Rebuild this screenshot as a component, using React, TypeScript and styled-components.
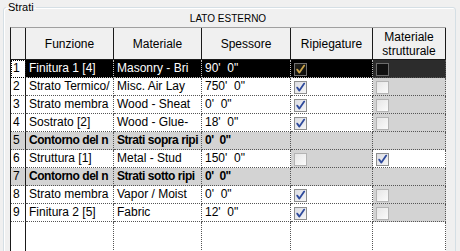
import React from 'react';
import styled, { createGlobalStyle, css } from 'styled-components';

const GlobalStyle = createGlobalStyle`
  html, body {
    margin: 0;
    padding: 0;
    background: #f0f0f0;
    overflow: hidden;
  }
  body {
    font-family: "Liberation Sans", Arial, sans-serif;
    font-size: 12px;
    color: #000;
  }
`;

const Page = styled.div`
  width: 460px;
  height: 251px;
  overflow: hidden;
  padding: 0 4px 0 3px;
  box-sizing: border-box;
`;

const GroupBox = styled.fieldset`
  margin: 0;
  padding: 0 9px 0 6px;
  min-width: 0;
  height: 280px;
  box-sizing: border-box;
  border: 1px solid #d5dfe5;
  border-radius: 3px;
  box-shadow: inset 1px 1px 0 #fff;
`;

const Legend = styled.legend`
  margin-left: -4px;
  padding: 0 2px;
  font-size: 11px;
  line-height: 14px;
`;

const SideTitle = styled.div`
  width: 436px;
  margin: -2px 0 2px;
  text-align: center;
  font-size: 10px;
  line-height: 13px;
`;

const COLS = '15px 88px 88px 89px 82px 73px';

const Table = styled.div`
  width: 436px;
  box-sizing: border-box;
  border-left: 1px solid #1a1a1a;
  border-top: 1px solid #a0a0a0;
`;

const HeaderRow = styled.div`
  display: grid;
  grid-template-columns: ${COLS};
  height: 32px;
  background: #f0f0f0;
`;

const HeaderCell = styled.div`
  display: flex;
  align-items: center;
  justify-content: center;
  text-align: center;
  line-height: 14px;
  box-sizing: border-box;
  border-right: 1px solid #1a1a1a;
  border-bottom: 1px solid #1a1a1a;
`;

const Row = styled.div`
  display: grid;
  grid-template-columns: ${COLS};
  height: 18px;
`;

type Tone = 'white' | 'gray' | 'sel' | 'selGray';

const toneBg: Record<Tone, string> = {
  white: '#fff',
  gray: '#d3d3d3',
  sel: '#000',
  selGray: '#2c2c2c',
};

const Cell = styled.div<{ $tone: Tone; $bold?: boolean }>`
  box-sizing: border-box;
  padding: 0 0 0 3px;
  overflow: hidden;
  white-space: pre;
  line-height: 17px;
  background: ${p => toneBg[p.$tone]};
  color: ${p => (p.$tone === 'sel' || p.$tone === 'selGray' ? '#fff' : '#000')};
  font-weight: ${p => (p.$bold ? 'bold' : 'normal')};
  letter-spacing: ${p => (p.$bold ? '-0.45px' : '0')};
  border-right: 1px dotted ${p => (p.$tone === 'sel' ? '#bbb' : '#555')};
  border-bottom: 1px dotted ${p => (p.$tone === 'sel' ? '#bbb' : '#555')};
`;

const RowHead = styled.div<{ $focus?: boolean; $tone: Tone }>`
  box-sizing: border-box;
  padding-left: 2px;
  line-height: 17px;
  background: ${p => (p.$tone === 'gray' ? '#d3d3d3' : '#fff')};
  border-right: 1px solid #1a1a1a;
  border-bottom: 1px dotted #555;
  ${p =>
    p.$focus &&
    css`
      outline: 1px dotted #000;
      outline-offset: -1px;
    `}
`;

const FillerRow = styled(Row)`
  height: 40px;
`;

const FillerHead = styled.div`
  border-right: 1px solid #1a1a1a;
  background: #fff;
`;

const FillerCell = styled.div`
  border-right: 1px dotted #555;
  background: #fff;
`;

type BoxKind = 'normal' | 'disabled' | 'sel' | 'selGray';

const boxStyles: Record<BoxKind, ReturnType<typeof css>> = {
  normal: css`
    border-color: #8e8f8f;
    background: linear-gradient(135deg, #dcdde3 0%, #f6f6f6 100%);
  `,
  disabled: css`
    border-color: #b4b4b4;
    background: linear-gradient(135deg, #e6e6e6 0%, #fbfbfb 100%);
  `,
  sel: css`
    border-color: #717070;
    background: linear-gradient(135deg, #23221c 0%, #090909 100%);
  `,
  selGray: css`
    border-color: #6c6c6c;
    background: #111;
  `,
};

const Box = styled.span<{ $kind: BoxKind }>`
  display: block;
  width: 13px;
  height: 13px;
  margin-top: 3px;
  box-sizing: border-box;
  border: 1px solid;
  ${p => boxStyles[p.$kind]}
  svg {
    display: block;
  }
`;

const CheckBox = ({ checked, kind }: { checked?: boolean; kind: BoxKind }) => (
  <Box $kind={kind}>
    {checked && (
      <svg width="11" height="11" viewBox="0 0 11 11">
        <path
          d="M2.2 5.6 L4.4 8.6 L9.2 1.6"
          fill="none"
          stroke={kind === 'sel' ? '#c9a24a' : '#2e4a9c'}
          strokeWidth="1.8"
          strokeLinecap="round"
          strokeLinejoin="round"
        />
      </svg>
    )}
  </Box>
);

interface Layer {
  fn: string;
  mat: string;
  thick: string;
  fold?: boolean;
  struct?: boolean;
  kind: 'layer' | 'boundary' | 'core';
}

const layers: Layer[] = [
  { fn: 'Finitura 1 [4]', mat: 'Masonry - Bri', thick: `90'  0"`, fold: true, kind: 'layer' },
  { fn: 'Strato Termico/', mat: 'Misc. Air Lay', thick: `750'  0"`, fold: true, kind: 'layer' },
  { fn: 'Strato membra', mat: 'Wood - Sheat', thick: `0'  0"`, fold: true, kind: 'layer' },
  { fn: 'Sostrato [2]', mat: 'Wood - Glue-', thick: `18'  0"`, fold: true, kind: 'layer' },
  { fn: 'Contorno del n', mat: 'Strati sopra ripi', thick: `0'  0"`, kind: 'boundary' },
  { fn: 'Struttura [1]', mat: 'Metal - Stud', thick: `150'  0"`, struct: true, kind: 'core' },
  { fn: 'Contorno del n', mat: 'Strati sotto ripi', thick: `0'  0"`, kind: 'boundary' },
  { fn: 'Strato membra', mat: 'Vapor / Moist', thick: `0'  0"`, fold: true, kind: 'layer' },
  { fn: 'Finitura 2 [5]', mat: 'Fabric', thick: `12'  0"`, fold: true, kind: 'layer' },
];

const LayerRow = ({ layer, index, selected }: { layer: Layer; index: number; selected: boolean }) => {
  const boundary = layer.kind === 'boundary';
  const base: Tone = selected ? 'sel' : boundary ? 'gray' : 'white';
  const foldTone: Tone = selected ? 'sel' : layer.kind === 'layer' ? 'white' : 'gray';
  const structTone: Tone = selected ? 'selGray' : layer.kind === 'core' ? 'white' : 'gray';

  return (
    <Row>
      <RowHead $focus={selected} $tone={boundary ? 'gray' : 'white'}>
        {index + 1}
      </RowHead>
      <Cell $tone={base} $bold={boundary}>{layer.fn}</Cell>
      <Cell $tone={base} $bold={boundary}>{layer.mat}</Cell>
      <Cell $tone={base} $bold={boundary}>{layer.thick}</Cell>
      <Cell $tone={foldTone}>
        {!boundary && (
          <CheckBox
            checked={layer.fold}
            kind={selected ? 'sel' : layer.kind === 'layer' ? 'normal' : 'disabled'}
          />
        )}
      </Cell>
      <Cell $tone={structTone}>
        {!boundary && (
          <CheckBox
            checked={layer.struct}
            kind={selected ? 'selGray' : layer.kind === 'core' ? 'normal' : 'disabled'}
          />
        )}
      </Cell>
    </Row>
  );
};

export default function App() {
  return (
    <>
      <GlobalStyle />
      <Page>
        <GroupBox>
          <Legend>Strati</Legend>
          <SideTitle>LATO ESTERNO</SideTitle>
          <Table>
            <HeaderRow>
              <HeaderCell />
              <HeaderCell>Funzione</HeaderCell>
              <HeaderCell>Materiale</HeaderCell>
              <HeaderCell>Spessore</HeaderCell>
              <HeaderCell>Ripiegature</HeaderCell>
              <HeaderCell>
                Materiale
                <br />
                strutturale
              </HeaderCell>
            </HeaderRow>
            {layers.map((layer, i) => (
              <LayerRow key={i} layer={layer} index={i} selected={i === 0} />
            ))}
            <FillerRow>
              <FillerHead />
              <FillerCell />
              <FillerCell />
              <FillerCell />
              <FillerCell />
              <FillerCell />
            </FillerRow>
          </Table>
        </GroupBox>
      </Page>
    </>
  );
}
